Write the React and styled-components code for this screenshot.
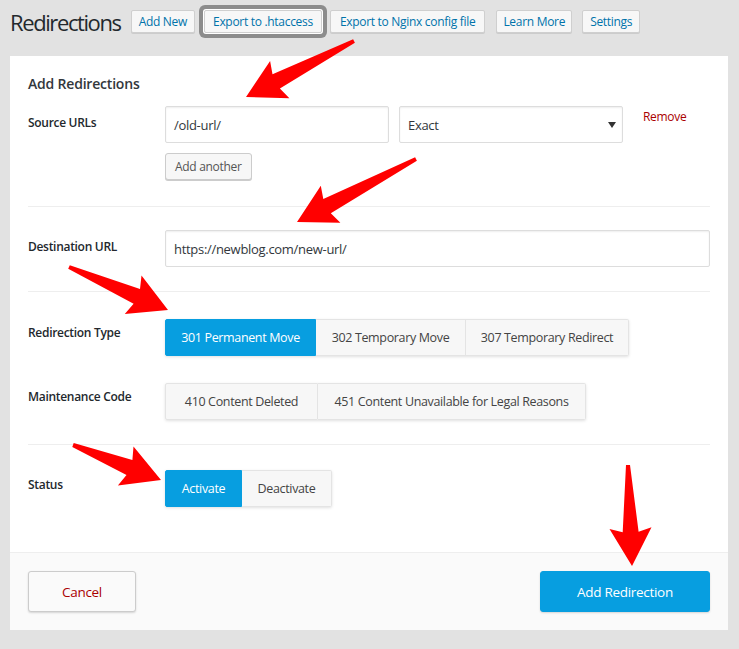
import React from 'react';
import styled, { createGlobalStyle, css } from 'styled-components';

const Global = createGlobalStyle`
  html, body {
    margin: 0;
    padding: 0;
    background: #e2e2e2;
    font-family: "Open Sans", "Liberation Sans", sans-serif;
    color: #23282d;
  }
`;

const Page = styled.div`
  position: relative;
  width: 739px;
  height: 649px;
  padding: 0 11px 0 10px;
  box-sizing: border-box;
`;

const Header = styled.div`
  display: flex;
  align-items: center;
  height: 43px;
  gap: 10px;
`;

const Title = styled.h1`
  margin: 0;
  font-size: 22px;
  font-weight: 400;
  letter-spacing: -1.4px;
  color: #23282d;
`;

const TopButton = styled.button`
  height: 23px;
  padding: 0 7px;
  font-family: inherit;
  font-size: 12px;
  letter-spacing: -0.3px;
  color: #0073aa;
  background: #f7f7f7;
  border: 1px solid #cfcfcf;
  border-radius: 2px;
  box-shadow: 0 1px 0 #ccc;
  ${p => p.$highlight && css`
    margin: 0 0 0 -1px;
    padding: 0 8px;
    box-shadow: 0 0 0 1px #fff, 0 0 0 5px #8c8c8c;
  `}
  ${p => p.$wide && css`
    margin-left: -2px;
    padding: 0 9px;
  `}
  ${p => p.$after && css`
    margin-left: 1px;
    padding: 0 6px;
  `}
`;

const Panel = styled.div`
  margin-top: 13px;
  background: #fff;
  display: flex;
  flex-direction: column;
`;

const Body = styled.div`
  padding: 18px 18px 0;
`;

const Heading = styled.h2`
  margin: 0 0 13px;
  font-size: 14px;
  font-weight: 600;
  letter-spacing: -0.2px;
  color: #32373c;
`;

const Row = styled.div`
  display: grid;
  grid-template-columns: 137px 1fr;
  margin-top: ${p => p.$top || 0}px;
`;

const Label = styled.div`
  font-size: 12px;
  font-weight: 600;
  letter-spacing: -0.3px;
  color: #23282d;
  padding-top: ${p => p.$pad || 8}px;
`;

const Fields = styled.div`
  display: flex;
  align-items: flex-start;
  gap: 10px;
`;

const Column = styled.div`
  display: flex;
  flex-direction: column;
  align-items: flex-start;
  gap: 10px;
`;

const Input = styled.div`
  box-sizing: border-box;
  width: ${p => p.$w ? `${p.$w}px` : '100%'};
  height: 37px;
  display: flex;
  align-items: center;
  justify-content: space-between;
  padding: 0 8px;
  font-size: 13px;
  letter-spacing: -0.3px;
  color: #32373c;
  border: 1px solid #ddd;
  border-radius: 2px;
  box-shadow: inset 0 1px 2px rgba(0,0,0,0.07);
  background: #fff;
`;

const Caret = styled.span`
  width: 0;
  height: 0;
  border-left: 4px solid transparent;
  border-right: 4px solid transparent;
  border-top: 6px solid #333;
  margin-right: -2px;
`;

const Remove = styled.a`
  margin: 2px 0 0 10px;
  font-size: 12px;
  letter-spacing: -0.3px;
  color: #a00;
`;

const SmallButton = styled.button`
  height: 27px;
  padding: 0 9px;
  font-family: inherit;
  font-size: 12px;
  letter-spacing: -0.3px;
  color: #555;
  background: #f7f7f7;
  border: 1px solid #ccc;
  border-radius: 3px;
  box-shadow: 0 1px 0 #ccc;
`;

const Divider = styled.hr`
  margin: ${p => p.$top}px 0 0;
  border: 0;
  border-top: 1px solid #eee;
`;

const Group = styled.div`
  display: inline-flex;
  border-radius: 2px;
  box-shadow: 0 1px 3px rgba(0,0,0,0.12);
`;

const Choice = styled.button`
  height: 37px;
  width: ${p => p.$w}px;
  padding: 0;
  font-family: inherit;
  font-size: 12.5px;
  letter-spacing: -0.35px;
  border: 1px solid #e4e4e4;
  border-left-width: 0;
  &:first-child { border-left-width: 1px; border-radius: 2px 0 0 2px; }
  &:last-child { border-radius: 0 2px 2px 0; }
  color: ${p => p.$active ? '#fff' : '#444'};
  background: ${p => p.$active ? '#079ee0' : '#f7f7f7'};
  ${p => p.$active && css`border-color: #079ee0;`}
`;

const Footer = styled.div`
  margin-top: 45px;
  padding: 18px 18px 18px;
  background: #fafafa;
  border-top: 1px solid #eee;
  display: flex;
  justify-content: space-between;
`;

const FooterButton = styled.button`
  height: 41px;
  width: ${p => p.$w}px;
  font-family: inherit;
  font-size: 13.5px;
  letter-spacing: -0.3px;
  border-radius: 3px;
  box-shadow: 0 1px 2px rgba(0,0,0,0.15);
  ${p => p.$primary ? css`
    color: #fff;
    background: #079ee0;
    border: 1px solid #079ee0;
  ` : css`
    color: #a00;
    background: #fafafa;
    border: 1px solid #ccc;
  `}
`;

const Overlay = styled.svg`
  position: absolute;
  left: 0;
  top: 0;
  pointer-events: none;
`;

// tapered shaft with a slightly barbed head, from tail to tip
function arrowPoints([tx, ty], [px, py], hl = 38, hw = 21, sw = 8) {
  const dx = px - tx;
  const dy = py - ty;
  const len = Math.hypot(dx, dy);
  const ux = dx / len;
  const uy = dy / len;
  const nx = -uy;
  const ny = ux;
  const bx = px - ux * hl;
  const by = py - uy * hl;
  const jx = px - ux * (hl - 4);
  const jy = py - uy * (hl - 4);
  const pts = [
    [tx + nx * 2, ty + ny * 2],
    [jx + nx * sw, jy + ny * sw],
    [bx + nx * hw, by + ny * hw],
    [px, py],
    [bx - nx * hw, by - ny * hw],
    [jx - nx * sw, jy - ny * sw],
    [tx - nx * 2, ty - ny * 2],
  ];
  return pts.map(p => p.map(v => v.toFixed(1)).join(',')).join(' ');
}

const arrows = [
  { from: [354, 41], to: [246, 97] },
  { from: [416, 159], to: [297, 222] },
  { from: [69, 267], to: [168, 310] },
  { from: [73, 445], to: [161, 480] },
  { from: [628, 465], to: [632, 566] },
];

export default function App() {
  return (
    <Page>
      <Global />
      <Header>
        <Title>Redirections</Title>
        <TopButton>Add New</TopButton>
        <TopButton $highlight>Export to .htaccess</TopButton>
        <TopButton $wide>Export to Nginx config file</TopButton>
        <TopButton $after>Learn More</TopButton>
        <TopButton>Settings</TopButton>
      </Header>
      <Panel>
        <Body>
          <Heading>Add Redirections</Heading>
          <Row>
            <Label>Source URLs</Label>
            <Column>
              <Fields>
                <Input $w={224}>/old-url/</Input>
                <Input $w={224}>Exact<Caret /></Input>
                <Remove>Remove</Remove>
              </Fields>
              <SmallButton>Add another</SmallButton>
            </Column>
          </Row>
          <Divider $top={26} />
          <Row $top={23}>
            <Label>Destination URL</Label>
            <Input>https://newblog.com/new-url/</Input>
          </Row>
          <Divider $top={24} />
          <Row $top={27}>
            <Label $pad={5}>Redirection Type</Label>
            <div>
              <Group>
                <Choice $w={151} $active>301 Permanent Move</Choice>
                <Choice $w={150}>302 Temporary Move</Choice>
                <Choice $w={163}>307 Temporary Redirect</Choice>
              </Group>
            </div>
          </Row>
          <Row $top={27}>
            <Label $pad={5}>Maintenance Code</Label>
            <div>
              <Group>
                <Choice $w={153}>410 Content Deleted</Choice>
                <Choice $w={268}>451 Content Unavailable for Legal Reasons</Choice>
              </Group>
            </div>
          </Row>
          <Divider $top={24} />
          <Row $top={25}>
            <Label $pad={6}>Status</Label>
            <div>
              <Group>
                <Choice $w={77} $active>Activate</Choice>
                <Choice $w={90}>Deactivate</Choice>
              </Group>
            </div>
          </Row>
        </Body>
        <Footer>
          <FooterButton $w={108}>Cancel</FooterButton>
          <FooterButton $w={170} $primary>Add Redirection</FooterButton>
        </Footer>
      </Panel>
      <Overlay width="739" height="649" viewBox="0 0 739 649">
        {arrows.map((a, i) => (
          <polygon key={i} points={arrowPoints(a.from, a.to)} fill="#f00" />
        ))}
      </Overlay>
    </Page>
  );
}
